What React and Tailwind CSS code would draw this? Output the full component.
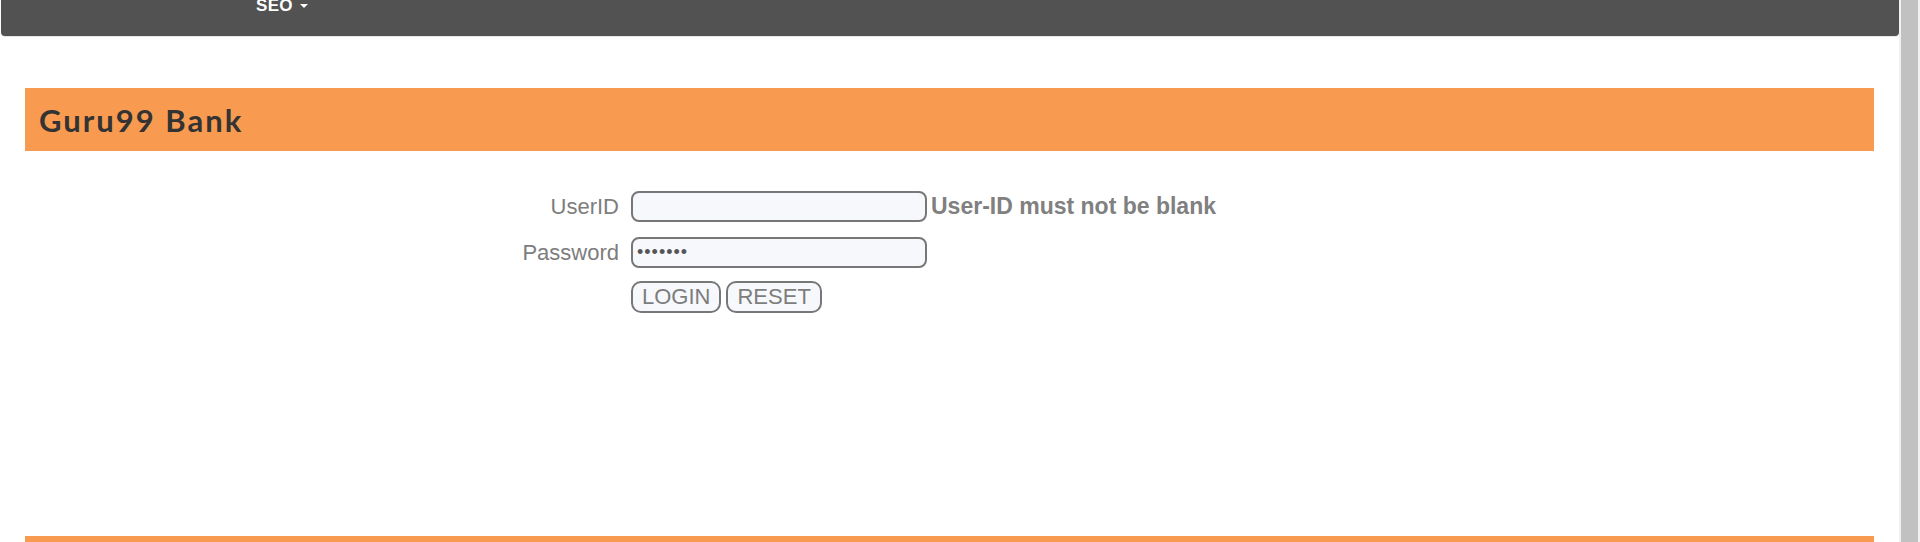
// App.jsx
const App = () => {
  return (
    <div className="flex h-[542px] w-full overflow-hidden bg-white font-['Liberation_Sans',Arial,sans-serif]">
      <div className="flex-1 flex flex-col overflow-hidden">
        {/* top navbar */}
        <div className="h-[36px] shrink-0 ml-[1px] bg-[#525252] rounded-b-[4px] shadow-[0_1px_1px_#e4e4e4] flex overflow-hidden">
          <div className="ml-[255px] mt-[-3px] flex items-start gap-[7px]">
            <span className="text-white font-bold text-[17px] leading-[17px] tracking-[0.3px]">SEO</span>
            <span className="mt-[7px] w-0 h-0 border-l-[4px] border-r-[4px] border-t-[4px] border-l-transparent border-r-transparent border-t-white" />
          </div>
        </div>

        <div className="shrink-0 px-[25px] pt-[52px] flex flex-col">
          {/* title bar */}
          <div className="h-[63px] shrink-0 bg-[#f89b50] flex items-center pl-[14px]">
            <h1 className="font-['Lato',sans-serif] font-bold text-[31px] text-[#333333] tracking-[2px] pt-[2px]">
              Guru99 Bank
            </h1>
          </div>

          {/* login form */}
          <div className="mt-[40px] grid grid-cols-[594px_1fr] gap-x-[12px] text-[22px] leading-[26px] text-[#7d7d7d]">
            <label className="text-right self-center pt-[1px]">UserID</label>
            <div className="flex items-start gap-[4px] h-[31px]">
              <input
                type="text"
                className="w-[296px] h-[31px] border-2 border-[#777777] rounded-[8px] bg-[#f7f8fc] outline-none"
              />
              <span className="font-bold text-[23px] leading-[26px] text-[#808080] mt-[2px]">
                User-ID must not be blank
              </span>
            </div>

            <label className="text-right self-center mt-[15px]">Password</label>
            <div className="mt-[15px] flex h-[31px]">
              <input
                type="password"
                defaultValue="1234567"
                className="w-[296px] h-[31px] border-2 border-[#777777] rounded-[8px] bg-[#f7f8fc] outline-none px-[4px] text-[18px] tracking-[1px] text-[#555]"
              />
            </div>

            <div />
            <div className="mt-[13px] flex gap-[5px] h-[32px]">
              <button className="h-[32px] px-[9px] border-2 border-[#777777] rounded-[10px] bg-[#f7f8fc] text-[22px] leading-none text-[#7d7d7d]">
                LOGIN
              </button>
              <button className="h-[32px] px-[9px] border-2 border-[#777777] rounded-[10px] bg-[#f7f8fc] text-[22px] leading-none text-[#7d7d7d]">
                RESET
              </button>
            </div>
          </div>

          {/* footer strip */}
          <div className="mt-[223px] h-[20px] shrink-0 bg-[#f89b50]" />
        </div>
      </div>

      {/* scrollbar */}
      <div className="w-[21px] h-full bg-[#f1f1f1] px-[2px] flex-none">
        <div className="h-full bg-[#c1c1c1]" />
      </div>
    </div>
  );
};

export default App;
